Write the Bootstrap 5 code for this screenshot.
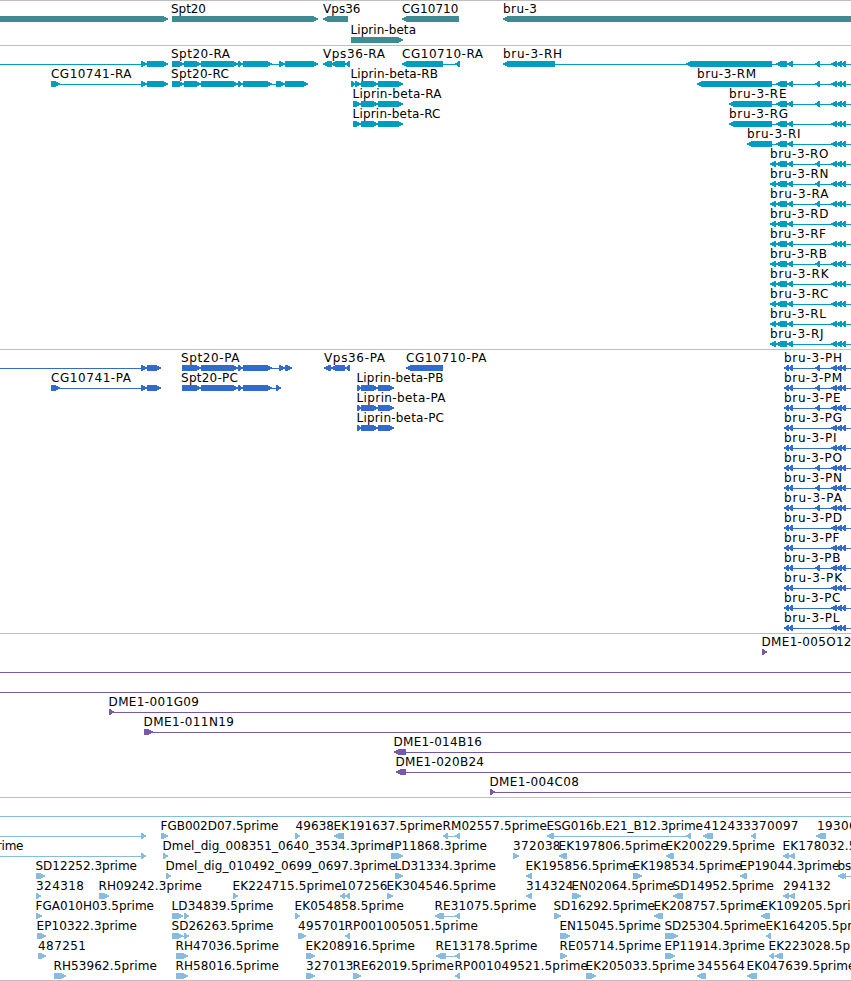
<!DOCTYPE html>
<html lang="en">
<head>
<meta charset="utf-8">
<meta name="viewport" content="width=device-width, initial-scale=1">
<title>Genome browser tracks</title>
<link href="https://cdn.jsdelivr.net/npm/bootstrap@5.3.0/dist/css/bootstrap.min.css" rel="stylesheet">
<style>
body { font-family: "DejaVu Sans", "Noto Sans", sans-serif; }
.browser { width: 851px; border-bottom: 1px solid #bebebe; }
.track { border-top: 1px solid #bebebe; padding-bottom: 3px; }
.track-genes { --ink: #3d8c92; padding-bottom: 2px; }
.track-transcripts { --ink: #009dbf; }
.track-proteins { --ink: #316bcd; }
.track-bacs { --ink: #7759a8; }
.track-ests { --ink: #88bbdd; padding-bottom: 2px; }
.lane { height: 20px; overflow: visible; }
.track-genes .lane { height: 21px; }
.lane text { font-size: 12px; fill: #000; }
.lane polygon, .lane rect { fill: var(--ink); shape-rendering: crispEdges; }
</style>
<script src="https://cdn.jsdelivr.net/npm/bootstrap@5.3.0/dist/js/bootstrap.bundle.min.js"></script>
</head>
<body class="bg-white m-0 overflow-hidden">
<main class="browser d-flex flex-column overflow-hidden" id="browser"></main>
<script>
// Each lane: [glyphs, labels]. Glyphs: "a~b" intron line, "a-b>" forward box, "a-b<" reverse box.
// Labels: [start, end, text].
const tail = "787-793< 831-837< 836-842< 841-846<";
const skip = "815-820< ";
const rna = (name, x, w, shape, extra) => [shape + " 776-787< " + (extra ? skip : "") + tail, [[x, x + w, "bru-3-" + name]]];
const shortRna = (name, extra) => rna(name, 770, name === "RJ" ? 53.5 : name === "RF" || name === "RL" ? 56 : name === "RB" ? 57 : 58.5, "771~851 770-776<", extra);
const protein = (name, extra) => ["785~851 784-789< 788-793< " + (extra ? skip : "") + "831-837< 836-842< 841-846<",
  [[784, 784 + (name === "PI" ? 52.5 : name === "PL" || name === "PF" ? 55.5 : name === "PB" || name === "PE" || name === "PC" ? 56.5 : 58), "bru-3-" + name]]];
const join = (...lanes) => [lanes.map(l => l[0]).join(" "), lanes.flatMap(l => l[1])];

const tracks = {
  genes: [
    ["-10-168> 172-318> 323-348< 402-459< 503-870<", [[171,206,"Spt20"],[323,360.5,"Vps36"],[402,458.5,"CG10710"],[503,537,"bru-3"]]],
    ["351-403>", [[350.5,416,"Liprin-beta"]]]
  ],
  transcripts: [
    join(["0~146 141-147> 147-168> 172-184> 184-201> 201-238> 238-243> 243-272> 270~285 279-285> 285-318> 323-332< 331-345< 345-350< 402-443< 443~459 455-460<",
      [[171,230,"Spt20-RA"],[323,385,"Vps36-RA"],[402,483,"CG10710-RA"]]],
      rna("RH", 503, 59, "503-555< 555~851 686-772<", true)),
    join(["51-60> 58~146 141-147> 147-168> 172-184> 184-201> 201-238> 238-243> 243-272> 270~280 276-285> 285-308> 351-355> 355-361> 361-378> 378-403>",
      [[51,131.5,"CG10741-RA"],[171,229,"Spt20-RC"],[350.5,438,"Liprin-beta-RB"]]],
      rna("RM", 697, 59, "697-772< 772~851", true)),
    join(["353-361> 361-378> 378-403>", [[352.5,441.5,"Liprin-beta-RA"]]], rna("RE", 729, 57.5, "729-772< 772~851", true)),
    join(["353-361> 361-378> 378-403>", [[352.5,440.5,"Liprin-beta-RC"]]], rna("RG", 729, 59, "729-772< 772~851", false)),
    rna("RI", 747, 53.5, "747-772< 772~851", false),
    shortRna("RO", true), shortRna("RN", true), shortRna("RA", true), shortRna("RD"), shortRna("RF"),
    shortRna("RB", true), shortRna("RK"), shortRna("RC"), shortRna("RL"), shortRna("RJ")
  ],
  proteins: [
    join(["0~146 141-147> 147-161> 182-201> 201-238> 238-243> 243-272> 270~286 279-285> 285-292> 324-331< 331-345< 345-350< 406-443<",
      [[181,239.5,"Spt20-PA"],[324,385,"Vps36-PA"],[406,486.5,"CG10710-PA"]]], protein("PH", true)),
    join(["51-60> 58~146 141-147> 147-161> 182-201> 201-238> 238-243> 243-272> 270~280 276-281> 357-361> 361-378> 378-394>",
      [[51,131,"CG10741-PA"],[181,238,"Spt20-PC"],[356.5,443.5,"Liprin-beta-PB"]]], protein("PM", true)),
    join(["357-361> 361-378> 378-394>", [[356.5,445.5,"Liprin-beta-PA"]]], protein("PE", true)),
    join(["357-361> 361-378> 378-394>", [[356.5,444,"Liprin-beta-PC"]]], protein("PG")),
    protein("PI"), protein("PO", true), protein("PN", true), protein("PA", true), protein("PD"),
    protein("PF"), protein("PB", true), protein("PK"), protein("PC"), protein("PL")
  ],
  bacs: [
    ["762-767>", [[761.5,851.5,"DME1-005O12"]]],
    ["0~851", []],
    ["0~851", []],
    ["109-114> 112~851", [[108.5,199,"DME1-001G09"]]],
    ["144-153> 150~851", [[143.5,234,"DME1-011N19"]]],
    ["394-406< 406~851", [[393.5,482,"DME1-014B16"]]],
    ["396-406< 406~851", [[395.5,484,"DME1-020B24"]]],
    ["490-495> 493~851", [[489.5,579,"DME1-004C08"]]]
  ],
  ests: [
    ["0~851", []],
    ["0~143 141-146> 161-168> 295-300> 334-344< 443-448< 448~459 455-460< 547-554< 554~690 686-691< 703-713< 751-756< 816-826<",
      [[160.5,278.5,"FGB002D07.5prime"],[295.5,334,"49638"],[333.5,442.5,"EK191637.5prime"],[442.5,547,"RM02557.5prime"],[546.5,703,"ESG016b.E21_B12.3prime"],[703.5,751,"412433"],[751,798.5,"370097"],[817,864.5,"193065"]]],
    ["0~143 141-146> 163-168> 391-403> 513-519> 559-567< 666-674< 783-789< 789-795<",
      [[-18,23.5,"3prime"],[162.5,393,"Dmel_dig_008351_0640_3534.3prime"],[390.5,487,"IP11868.3prime"],[513,560.5,"372038"],[558.5,668,"EK197806.5prime"],[665.5,775,"EK200229.5prime"],[782.5,892,"EK178032.5prime"]]],
    ["36-45> 166-171> 395-403> 526-532< 633-642> 740-747< 838-844< 843-846< 846~851",
      [[35.5,137,"SD12252.3prime"],[165.5,396,"Dmel_dig_010492_0699_0697.3prime"],[394.5,496,"LD31334.3prime"],[525.5,635,"EK195856.5prime"],[632.5,742,"EK198534.5prime"],[739.5,839.5,"EP19044.3prime"],[837.5,874,"bs134"]]],
    ["36-41> 99-109> 233-238> 340-345< 345-350< 387-393> 526-532< 572-581> 673-683< 783-789< 789-795<",
      [[36,84,"324318"],[98.5,202,"RH09242.3prime"],[232.5,342,"EK224715.5prime"],[340,387.5,"107256"],[386.5,496,"EK304546.5prime"],[526,573.5,"314324"],[571.5,674.5,"EN02064.5prime"],[672.5,774,"SD14952.5prime"],[783,831,"294132"]]],
    ["36-42> 172-183> 184-189> 295-300> 435-444< 444~459 455-460< 554-561> 654-663< 761-770<",
      [[35.5,154,"FGA010H03.5prime"],[171.5,273.5,"LD34839.5prime"],[294.5,404,"EK054858.5prime"],[434.5,536.5,"RE31075.5prime"],[553.5,655,"SD16292.5prime"],[653.5,763,"EK208757.5prime"],[760.5,870,"EK109205.5prime"]]],
    ["37-46> 172-183> 182~186 184-189> 298-306> 345-350< 560-570> 665-678> 766-771<",
      [[36.5,137,"EP10322.3prime"],[171.5,273.5,"SD26263.5prime"],[298,345.5,"495701"],[344.5,478,"RP001005051.5prime"],[559.5,661,"EN15045.5prime"],[664.5,766,"SD25304.5prime"],[765.5,875,"EK164205.5prime"]]],
    ["38-46> 176-188> 306-315> 436-446< 446~459 455-460< 560-567> 665-675> 769-774< 774~777 775-783<",
      [[38,86,"487251"],[175.5,279,"RH47036.5prime"],[305.5,415,"EK208916.5prime"],[435.5,537.5,"RE13178.5prime"],[559.5,661.5,"RE05714.5prime"],[664.5,765,"EP11914.3prime"],[768.5,878,"EK223028.5prime"]]],
    ["54-66> 176-188> 306-315> 353-361> 455-460< 586-596> 697-706< 747-757<",
      [[53.5,157,"RH53962.5prime"],[175.5,279,"RH58016.5prime"],[306,353.5,"327013"],[352.5,454,"RE62019.5prime"],[454.5,588,"RP001049521.5prime"],[585.5,695,"EK205033.5prime"],[697,745,"345564"],[746.5,855.5,"EK047639.5prime"]]]
  ]
};

function glyph(token) {
  const [, a, kind, b, dir] = token.match(/^(-?\d+)([-~])(\d+)([<>]?)$/);
  const s = +a, e = +b;
  if (kind === "~") return `<rect x="${s}" y="18" width="${e - s}" height="1"/>`;
  const head = Math.min(6, e - s);
  const pts = dir === ">"
    ? [[e-head,15],[e-head+1,15],[e,17.5],[e,18.5],[e-head+1,21],[s,21],[s,15]]
    : [[s+head,15],[s+head-1,15],[s,17.5],[s,18.5],[s+head-1,21],[e,21],[e,15]];
  return `<polygon points="${pts.map(p => p.join()).join(" ")}"/>`;
}

document.getElementById("browser").innerHTML = Object.entries(tracks).map(([name, lanes]) =>
  `<section class="track track-${name} d-flex flex-column">` + lanes.map(([glyphs, labels]) =>
    `<svg class="lane d-block w-100 flex-shrink-0">${glyphs.split(" ").map(glyph).join("")}` +
    labels.map(([x, end, t]) => `<text x="${x}" y="12" textLength="${end - x}">${t}</text>`).join("") +
    `</svg>`).join("") + `</section>`).join("");
</script>
</body>
</html>
